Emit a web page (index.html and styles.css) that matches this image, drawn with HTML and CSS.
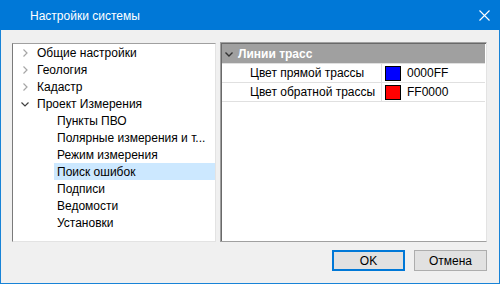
FILE: index.html
```html
<!DOCTYPE html>
<html lang="ru">
<head>
    <meta charset="UTF-8">
    <title>Настройки системы</title>
    <link rel="stylesheet" href="styles.css">
</head>
<body>
    <div class="window">
        <div class="titlebar">
            <span class="title">Настройки системы</span>
            <svg class="close" width="11" height="11" viewBox="0 0 11 11">
                <path d="M0.5 0.5 L10.5 10.5 M10.5 0.5 L0.5 10.5" stroke="#fff" stroke-width="1.1" fill="none"/>
            </svg>
        </div>
        <div class="content">
            <div class="panes">
                <div class="tree">
                    <div class="node">
                        <span class="twisty"><svg width="5" height="8" viewBox="0 0 5 8"><path d="M0.5 0.5 L4 4 L0.5 7.5" stroke="#a6a6a6" stroke-width="1.2" fill="none"/></svg></span>
                        Общие настройки
                    </div>
                    <div class="node">
                        <span class="twisty"><svg width="5" height="8" viewBox="0 0 5 8"><path d="M0.5 0.5 L4 4 L0.5 7.5" stroke="#a6a6a6" stroke-width="1.2" fill="none"/></svg></span>
                        Геология
                    </div>
                    <div class="node">
                        <span class="twisty"><svg width="5" height="8" viewBox="0 0 5 8"><path d="M0.5 0.5 L4 4 L0.5 7.5" stroke="#a6a6a6" stroke-width="1.2" fill="none"/></svg></span>
                        Кадастр
                    </div>
                    <div class="node">
                        <span class="twisty"><svg width="8" height="5" viewBox="0 0 8 5"><path d="M0.5 0.5 L4 4 L7.5 0.5" stroke="#404040" stroke-width="1.2" fill="none"/></svg></span>
                        Проект Измерения
                    </div>
                    <div class="node child">Пункты ПВО</div>
                    <div class="node child">Полярные измерения и т...</div>
                    <div class="node child">Режим измерения</div>
                    <div class="node child selected">Поиск ошибок</div>
                    <div class="node child">Подписи</div>
                    <div class="node child">Ведомости</div>
                    <div class="node child">Установки</div>
                </div>
                <div class="grid">
                    <div class="grid-head">
                        <svg width="8" height="5" viewBox="0 0 8 5"><path d="M0.5 0.5 L4 4 L7.5 0.5" stroke="#333" stroke-width="1.4" fill="none"/></svg>
                        Линии трасс
                    </div>
                    <div class="grid-row">
                        <div class="prop-name">Цвет прямой трассы</div>
                        <div class="prop-value"><span class="swatch" style="background:#0000ff"></span>0000FF</div>
                    </div>
                    <div class="grid-row">
                        <div class="prop-name">Цвет обратной трассы</div>
                        <div class="prop-value"><span class="swatch" style="background:#ff0000"></span>FF0000</div>
                    </div>
                </div>
            </div>
            <div class="buttons">
                <button class="btn default">OK</button>
                <button class="btn">Отмена</button>
            </div>
        </div>
    </div>
</body>
</html>
```

FILE: styles.css
```css
body, html {
    margin: 0;
    padding: 0;
    background-color: #fff;
    font-family: "Liberation Sans", Arial, sans-serif;
    font-size: 12px;
}
.window {
    width: 500px;
    height: 284px;
    box-sizing: border-box;
    border: 1px solid #1883d7;
    border-top: none;
    background-color: #f0f0f0;
    display: flex;
    flex-direction: column;
}
.titlebar {
    height: 30px;
    margin: 0 -1px;
    background-color: #0078d7;
    color: #fff;
    display: flex;
    align-items: center;
    justify-content: space-between;
    padding: 0 10px 0 30px;
    font-size: 12px;
}
.title {
    padding-top: 1px;
}
.close {
    display: block;
}
.content {
    flex: 1;
    padding: 12px 12px 0 11px;
    display: flex;
    flex-direction: column;
}
.panes {
    display: flex;
    gap: 4px;
    height: 200px;
}
.tree {
    width: 204px;
    height: 199px;
    margin-top: 1px;
    box-sizing: border-box;
    background: #fff;
    border-top: 1px solid #a0a0a0;
    border-left: 1px solid #7a7a7a;
    border-right: 1px solid #e3e3e3;
    border-bottom: 1px solid #e3e3e3;
}
.node {
    height: 16px;
    padding-top: 1px;
    line-height: 16px;
    display: flex;
    align-items: center;
    color: #000;
    white-space: nowrap;
}
.twisty {
    width: 24px;
    flex: none;
    display: flex;
    justify-content: center;
    align-items: center;
}
.twisty svg {
    display: block;
}
.node.child {
    margin-left: 41px;
    padding-left: 3px;
}
.node.selected {
    background-color: #cce8ff;
}
.grid {
    width: 267px;
    box-sizing: border-box;
    background: #fff;
    border-top: 1px solid #a0a0a0;
    border-left: 1px solid #a0a0a0;
    border-right: 1px solid #e3e3e3;
    border-bottom: 1px solid #a0a0a0;
    box-shadow: inset 1px 1px 0 #696969;
    padding: 1px 1px 0 1px;
}
.grid-head {
    height: 19px;
    background-color: #a0a0a0;
    color: #fff;
    font-weight: bold;
    display: flex;
    align-items: center;
    gap: 5px;
    padding-left: 3px;
    border-bottom: 1px solid #e0e0e0;
}
.grid-head svg {
    display: block;
    margin-top: 1px;
}
.grid-row {
    display: flex;
    height: 18px;
    border-bottom: 1px solid #e0e0e0;
}
.prop-name {
    width: 160px;
    padding-left: 28px;
    box-sizing: border-box;
    line-height: 18px;
    border-right: 1px solid #e0e0e0;
    color: #000;
}
.prop-value {
    display: flex;
    align-items: center;
    padding-left: 3px;
    color: #000;
}
.swatch {
    width: 14px;
    height: 13px;
    border: 1px solid #000;
    margin-right: 6px;
}
.buttons {
    display: flex;
    justify-content: flex-end;
    gap: 9px;
    margin-top: 8px;
}
.btn {
    width: 73px;
    height: 21px;
    margin: 0;
    padding: 0;
    font-family: "Liberation Sans", Arial, sans-serif;
    font-size: 12px;
    color: #000;
    background-color: #e1e1e1;
    border: 1px solid #adadad;
    box-sizing: border-box;
}
.btn.default {
    border: 2px solid #0078d7;
}
```
